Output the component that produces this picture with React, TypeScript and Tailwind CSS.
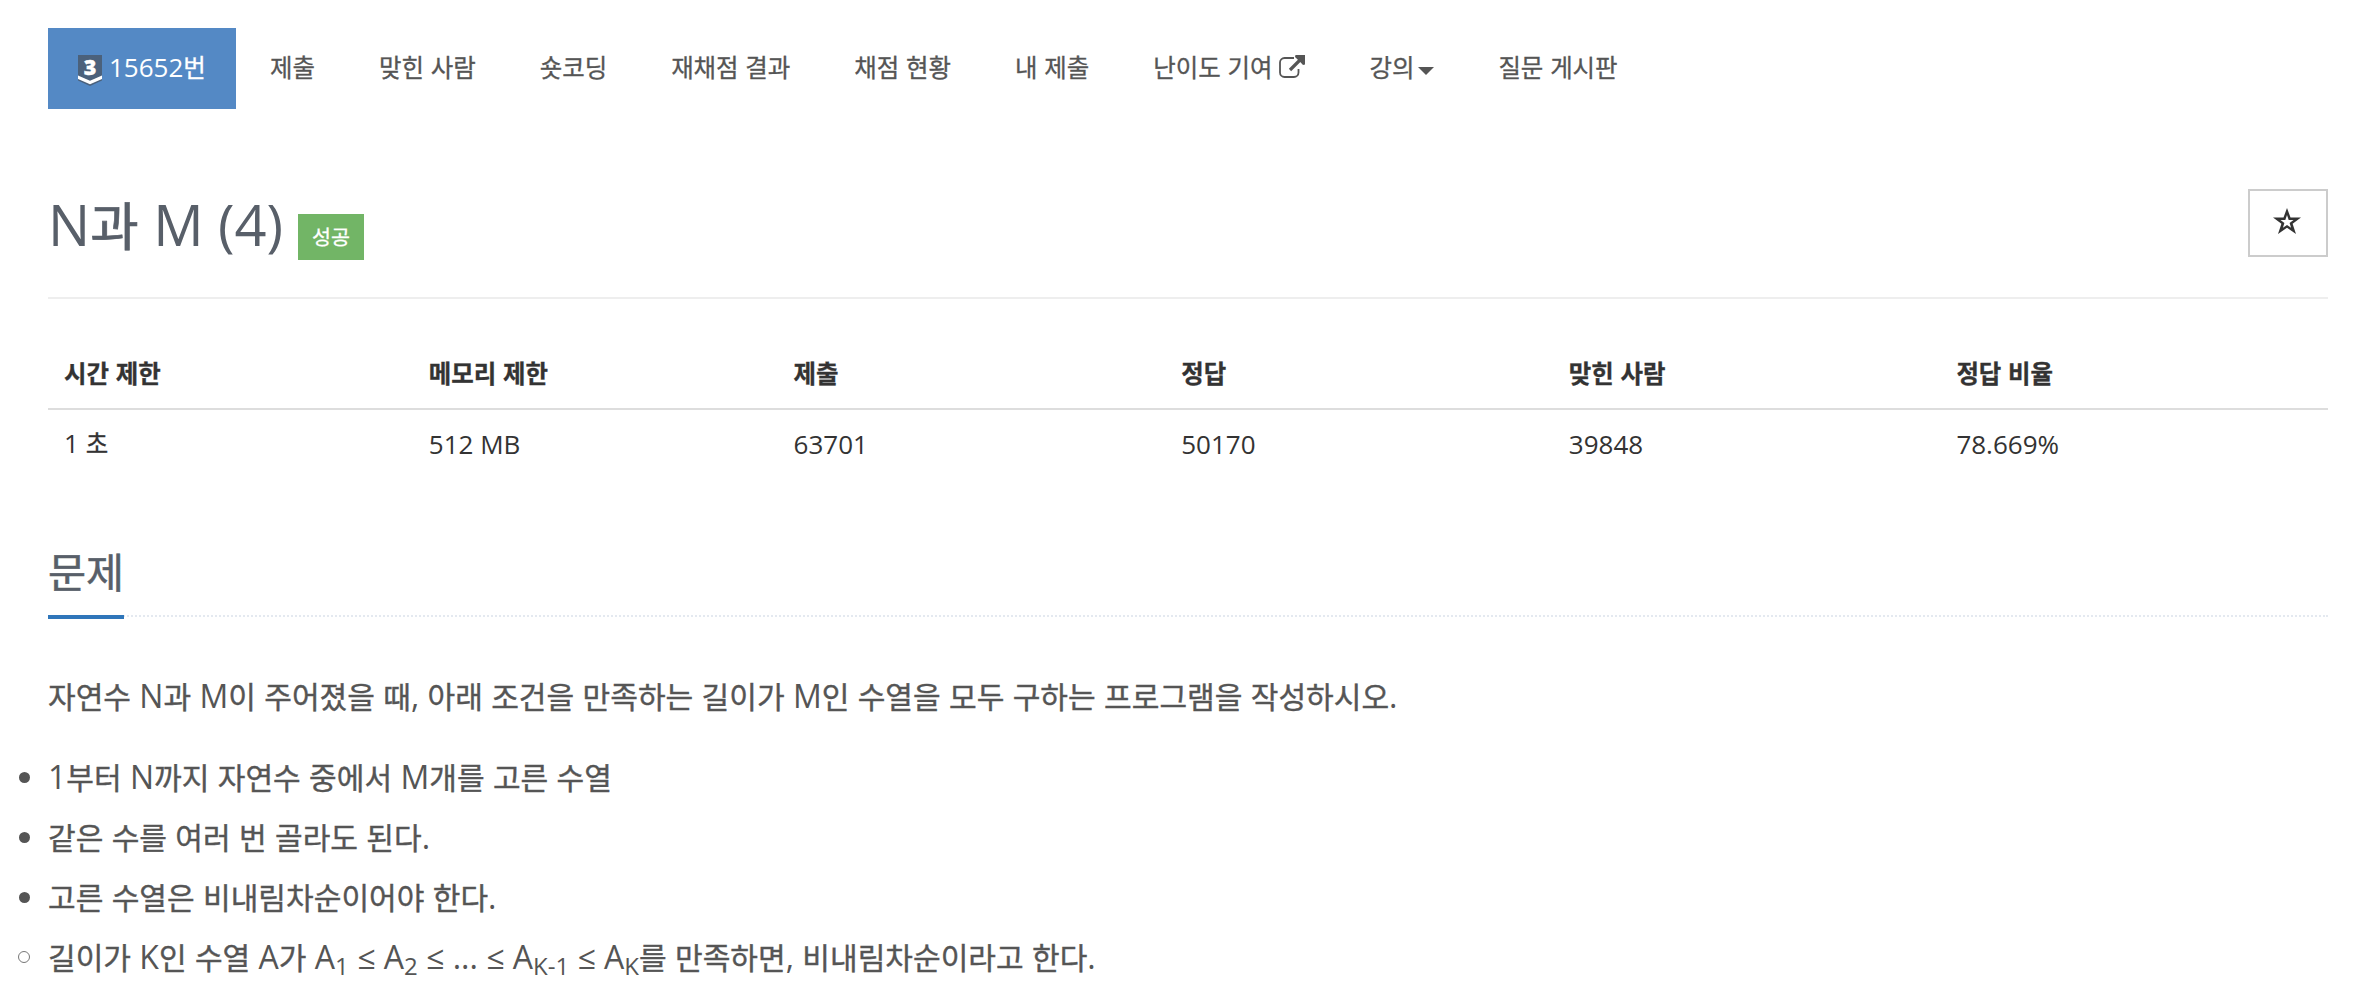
import React from 'react';

// 한글은 라틴 문자보다 조금 작게 표시
function Ko({ children }: { children: string }) {
  return (
    <>
      {children.split(/([가-힣]+)/).map((part, i) =>
        i % 2 === 1 ? (
          <span key={i} className="text-[0.94em] [-webkit-text-stroke:0.013em_currentColor]">{part}</span>
        ) : (
          part
        )
      )}
    </>
  );
}

function TierIcon() {
  return (
    <svg className="mr-[7px] mt-1 h-[31px] w-6 overflow-visible" viewBox="0 0 24 31">
      <path d="M0 0h24v25.500l-12 5.500l-12-5.500z" fill="#4b617b" />
      <path d="M0 20.500l12 5.200l12-5.200v3.500l-12 5.200l-12-5.200z" fill="#fff" />
      <text x="12" y="19.500" textAnchor="middle" fontSize="21.500" fontWeight="800" fill="#fff" stroke="#fff" strokeWidth="0.4">3</text>
    </svg>
  );
}

function ExternalIcon() {
  return (
    <svg className="mb-[2px] ml-[7px] h-[24px] w-[26px]" viewBox="0 0 26 24" fill="none" stroke="#555">
      <path d="M15 3H5.500A4.500 4.500 0 0 0 1 7.500v10A4.500 4.500 0 0 0 5.500 22H15a4.500 4.500 0 0 0 4.500-4.500V14" strokeWidth="1.800" />
      <path d="M11 15L21.500 4.500" strokeWidth="3.200" />
      <path d="M16.500 0H26v9.500l-2 .5-3-3.200-2.400-2.400-2.600-2.400z" fill="#555" stroke="none" />
    </svg>
  );
}

const menus = ['제출', '맞힌 사람', '숏코딩', '재채점 결과', '채점 현황', '내 제출', '난이도 기여', '강의', '질문 게시판'];

const columns = [
  { label: '시간 제한', value: '1 초' },
  { label: '메모리 제한', value: '512 MB' },
  { label: '제출', value: '63701' },
  { label: '정답', value: '50170' },
  { label: '맞힌 사람', value: '39848' },
  { label: '정답 비율', value: '78.669%' },
];

const conditions = [
  '1부터 N까지 자연수 중에서 M개를 고른 수열',
  '같은 수를 여러 번 골라도 된다.',
  '고른 수열은 비내림차순이어야 한다.',
];

function Sub({ children }: { children: React.ReactNode }) {
  return <sub className="bottom-[-0.25em] text-[24px] leading-none">{children}</sub>;
}

export default function App() {
  return (
    <div className="h-[1000px] w-[2354px] overflow-hidden bg-white pl-12 pr-[26px] pt-7 font-['Open_Sans','Noto_Sans_CJK_KR',sans-serif] text-[26px] text-[#333]">
      <nav className="flex h-[81px] gap-1 leading-none text-[#555]">
        <a className="flex w-[188px] items-center bg-[#5489c5] pl-[30px] text-white">
          <TierIcon />
          <span className="pb-[2px]"><Ko>15652번</Ko></span>
        </a>
        {menus.map((menu) => (
          <a key={menu} className="flex items-center whitespace-nowrap px-[30px] pb-px">
            <span className="pb-px"><Ko>{menu}</Ko></span>
            {menu === '난이도 기여' && <ExternalIcon />}
            {menu === '강의' && (
              <span className="ml-1 mt-[5px] border-x-8 border-t-8 border-x-transparent border-t-[#555]" />
            )}
          </a>
        ))}
      </nav>

      <header className="flex h-[190px] justify-between border-b-2 border-[#eee] pt-20">
        <div className="flex">
          <h1 className="-mt-[3px] text-[56px] leading-[76px] text-[#585f69]"><Ko>N과 M (4)</Ko></h1>
          <span className="ml-[15px] mt-[25px] flex h-[46px] w-[66px] items-center justify-center bg-[#72b566] text-[22px] leading-none text-white">
            <Ko>성공</Ko>
          </span>
        </div>
        <button className="flex h-[68px] w-20 items-center justify-center border-2 border-[#ccc] pb-1 pr-[2px]">
          <svg className="h-[27px] w-7" viewBox="0 0 28 27">
            <path d="M14 0l3.500 9.500H28l-8.400 6.300L23 26l-9-6.200L5 26l3.400-10.200L0 9.500h10.500z M14 7l-1.700 5H7.500l3.900 3.100-1.500 4.700 4.100-2.900 4.100 2.900-1.500-4.700 3.900-3.100h-4.800z" fill="#333" fillRule="evenodd" />
          </svg>
        </button>
      </header>

      <table className="mt-[38px] w-full table-fixed text-left">
        <colgroup>
          <col className="w-[16%]" />
          <col className="w-[16%]" />
          <col className="w-[17%]" />
          <col className="w-[17%]" />
          <col className="w-[17%]" />
          <col className="w-[17%]" />
        </colgroup>
        <thead>
          <tr className="h-[72px] border-b-2 border-[#ddd]">
            {columns.map((col) => (
              <th key={col.label} className="px-4 pb-0 pt-[2px] font-bold leading-none"><Ko>{col.label}</Ko></th>
            ))}
          </tr>
        </thead>
        <tbody>
          <tr className="h-[70px]">
            {columns.map((col) => (
              <td key={col.label} className="px-4 pb-[2px] pt-0 leading-none"><Ko>{col.value}</Ko></td>
            ))}
          </tr>
        </tbody>
      </table>

      <section className="mt-[59px] text-[32px] leading-[60px] text-[#555]">
        <div className="flex h-[79px] border-b-2 border-dotted border-[#e4e9f0]">
          <h2 className="h-[81px] border-b-4 border-[#2f76ba] text-[44px] leading-[66px] text-[#585f69]"><Ko>문제</Ko></h2>
        </div>
        <p className="mt-[49px]"><Ko>자연수 N과 M이 주어졌을 때, 아래 조건을 만족하는 길이가 M인 수열을 모두 구하는 프로그램을 작성하시오.</Ko></p>
        <ul className="-ml-[30px] mt-5">
          {conditions.map((text) => (
            <li key={text} className="flex h-[60px] items-center">
              <span className="ml-[1px] mr-[18px] size-[11px] rounded-full bg-[#555]" />
              <span><Ko>{text}</Ko></span>
            </li>
          ))}
          <li className="flex h-[60px] items-center">
            <span className="mr-[18px] size-3 rounded-full border border-[#777]" />
            <span>
              <Ko>길이가 K인 수열 A가 A</Ko><Sub>1</Sub> ≤ A<Sub>2</Sub> ≤ ... ≤ A<Sub>K-1</Sub> ≤ A<Sub>K</Sub>
              <Ko>를 만족하면, 비내림차순이라고 한다.</Ko>
            </span>
          </li>
        </ul>
      </section>
    </div>
  );
}
